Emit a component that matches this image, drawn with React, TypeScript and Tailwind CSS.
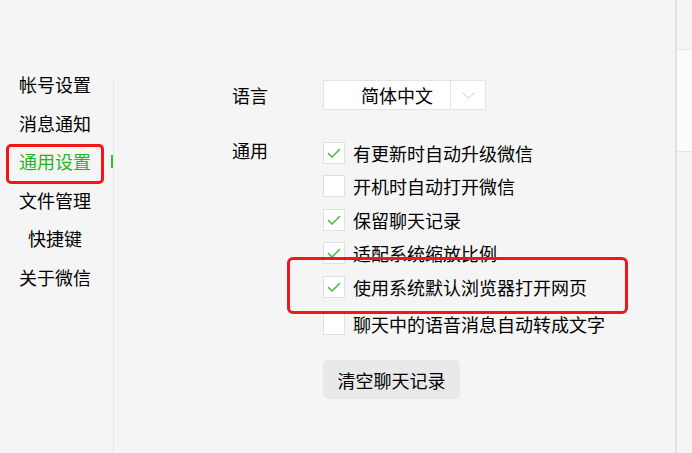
import React, { useState } from "react";

const menu = ["帐号设置", "消息通知", "通用设置", "文件管理", "快捷键", "关于微信"];

const options = [
  { label: "有更新时自动升级微信", checked: true },
  { label: "开机时自动打开微信", checked: false },
  { label: "保留聊天记录", checked: true },
  { label: "适配系统缩放比例", checked: true },
  { label: "使用系统默认浏览器打开网页", checked: true },
  { label: "聊天中的语音消息自动转成文字", checked: false },
];

const Check = () => (
  <svg width="14" height="10" viewBox="0 0 14 10" fill="none">
    <path d="M1 5.2 L5 9 L13 1" stroke="#4fbd4f" strokeWidth="1.6" />
  </svg>
);

const App: React.FC = () => {
  const [active] = useState(2);
  const [opts, setOpts] = useState(options);

  const toggle = (i: number) =>
    setOpts((prev) => prev.map((o, j) => (j === i ? { ...o, checked: !o.checked } : o)));

  return (
    <div
      className="w-[692px] h-[453px] bg-[#f5f5f5] flex overflow-hidden relative text-[18px] text-black"
      style={{ fontFamily: '"Noto Sans CJK SC", "Microsoft YaHei", sans-serif' }}
    >
      {/* Sidebar */}
      <div className="w-[113px] shrink-0 pt-[65px] flex flex-col">
        {menu.map((m, i) => (
          <div
            key={m}
            className={`relative h-[38.5px] w-[110px] flex items-center justify-center leading-none ${
              i === active ? "text-[#1fb71f]" : ""
            }`}
          >
            {m}
            {i === active && (
              <>
                <span className="absolute left-[6px] top-[2px] w-[98px] h-[40px] border-[3px] border-[#f21616] rounded-[5px]" />
                <span className="absolute right-[-3px] top-[13px] w-[2px] h-[13px] bg-[#2ec42e]" />
              </>
            )}
          </div>
        ))}
      </div>
      <div className="w-px mt-[78px] bg-[#e6e6e6] shrink-0" />

      {/* Content */}
      <div className="flex-1 pl-[118px] pt-[80px] relative">
        <div className="flex items-center h-[30px]">
          <div className="w-[91px] leading-none">语言</div>
          <div className="flex h-[30px] w-[163px] bg-white border border-[#e3e3e3]">
            <div className="w-[126px] pl-[37px] flex items-center leading-none">简体中文</div>
            <div className="flex-1 border-l border-[#e3e3e3] flex items-center justify-center">
              <svg width="13" height="7" viewBox="0 0 13 7" fill="none">
                <path d="M0.5 0.5 L6.5 6.2 L12.5 0.5" stroke="#c9c9c9" strokeWidth="1" />
              </svg>
            </div>
          </div>
        </div>

        <div className="flex mt-[26px]">
          <div className="w-[91px] leading-none pt-[5px]">通用</div>
          <div className="flex flex-col">
            {opts.map((o, i) => (
              <div
                key={o.label}
                className={`h-[33.5px] flex items-center gap-[8px] cursor-default ${i === 5 ? "mt-[4px]" : ""}`}
                onClick={() => toggle(i)}
              >
                <span className="w-[22px] h-[22px] bg-white border border-[#e0e0e0] flex items-center justify-center shrink-0">
                  {o.checked && <Check />}
                </span>
                <span className="leading-none">{o.label}</span>
              </div>
            ))}
            <button className="mt-[19px] w-[137px] h-[39px] rounded-[5px] bg-[#e9e9e9] flex items-center justify-center leading-none">
              清空聊天记录
            </button>
          </div>
        </div>

        <span className="absolute left-[173px] top-[257px] w-[341px] h-[57px] border-[3px] border-[#f21616] rounded-[6px] pointer-events-none" />
      </div>

      {/* Right edge of next window */}
      <div className="w-[2px] bg-[#e2e2e2] shrink-0" />
      <div className="w-[15px] shrink-0 flex flex-col">
        <div className="h-[50px] bg-[#f4f4f4] border-b border-[#e6e6e6]" />
        <div className="h-[102px] bg-[#fbfbfb] border-b border-[#e6e6e6]" />
        <div className="flex-1 bg-[#f4f4f4]" />
      </div>
    </div>
  );
};

export default App;
